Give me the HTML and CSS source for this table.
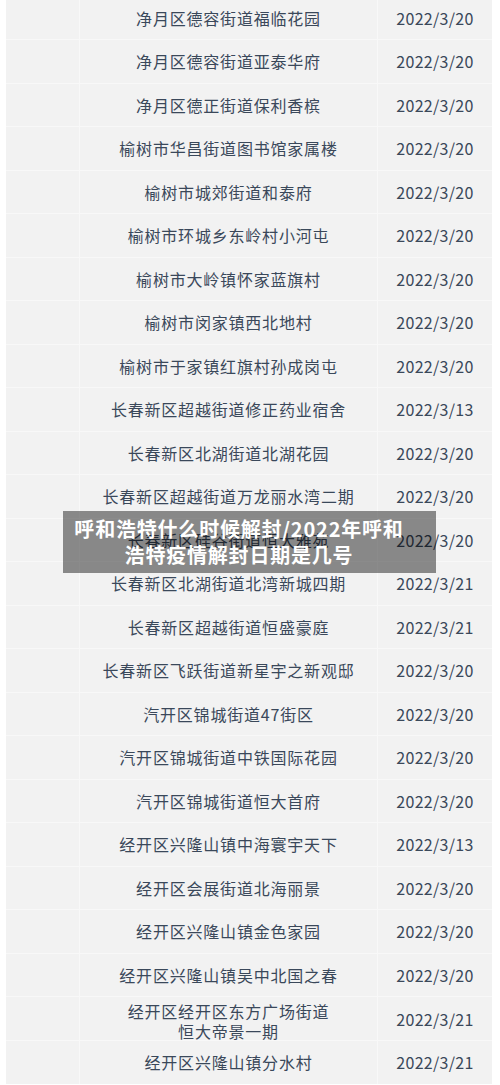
FILE: index.html
```html
<!DOCTYPE html>
<html lang="zh-CN">
<head>
<meta charset="utf-8">
<link rel="stylesheet" href="styles.css">
</head>
<body>
<div class="page">
  <div class="table">
    <div class="row"><div class="blank"></div><div class="name">净月区德容街道福临花园</div><div class="date">2022/3/20</div></div>
    <div class="row"><div class="blank"></div><div class="name">净月区德容街道亚泰华府</div><div class="date">2022/3/20</div></div>
    <div class="row"><div class="blank"></div><div class="name">净月区德正街道保利香槟</div><div class="date">2022/3/20</div></div>
    <div class="row"><div class="blank"></div><div class="name">榆树市华昌街道图书馆家属楼</div><div class="date">2022/3/20</div></div>
    <div class="row"><div class="blank"></div><div class="name">榆树市城郊街道和泰府</div><div class="date">2022/3/20</div></div>
    <div class="row"><div class="blank"></div><div class="name">榆树市环城乡东岭村小河屯</div><div class="date">2022/3/20</div></div>
    <div class="row"><div class="blank"></div><div class="name">榆树市大岭镇怀家蓝旗村</div><div class="date">2022/3/20</div></div>
    <div class="row"><div class="blank"></div><div class="name">榆树市闵家镇西北地村</div><div class="date">2022/3/20</div></div>
    <div class="row"><div class="blank"></div><div class="name">榆树市于家镇红旗村孙成岗屯</div><div class="date">2022/3/20</div></div>
    <div class="row"><div class="blank"></div><div class="name">长春新区超越街道修正药业宿舍</div><div class="date">2022/3/13</div></div>
    <div class="row"><div class="blank"></div><div class="name">长春新区北湖街道北湖花园</div><div class="date">2022/3/20</div></div>
    <div class="row"><div class="blank"></div><div class="name">长春新区超越街道万龙丽水湾二期</div><div class="date">2022/3/20</div></div>
    <div class="row"><div class="blank"></div><div class="name">长春新区硅谷街道恒大雅苑</div><div class="date">2022/3/20</div></div>
    <div class="row"><div class="blank"></div><div class="name">长春新区北湖街道北湾新城四期</div><div class="date">2022/3/21</div></div>
    <div class="row"><div class="blank"></div><div class="name">长春新区超越街道恒盛豪庭</div><div class="date">2022/3/21</div></div>
    <div class="row"><div class="blank"></div><div class="name">长春新区飞跃街道新星宇之新观邸</div><div class="date">2022/3/20</div></div>
    <div class="row"><div class="blank"></div><div class="name">汽开区锦城街道47街区</div><div class="date">2022/3/20</div></div>
    <div class="row"><div class="blank"></div><div class="name">汽开区锦城街道中铁国际花园</div><div class="date">2022/3/20</div></div>
    <div class="row"><div class="blank"></div><div class="name">汽开区锦城街道恒大首府</div><div class="date">2022/3/20</div></div>
    <div class="row"><div class="blank"></div><div class="name">经开区兴隆山镇中海寰宇天下</div><div class="date">2022/3/13</div></div>
    <div class="row"><div class="blank"></div><div class="name">经开区会展街道北海丽景</div><div class="date">2022/3/20</div></div>
    <div class="row"><div class="blank"></div><div class="name">经开区兴隆山镇金色家园</div><div class="date">2022/3/20</div></div>
    <div class="row"><div class="blank"></div><div class="name">经开区兴隆山镇吴中北国之春</div><div class="date">2022/3/20</div></div>
    <div class="row"><div class="blank"></div><div class="name two">经开区经开区东方广场街道<br>恒大帝景一期</div><div class="date">2022/3/21</div></div>
    <div class="row"><div class="blank"></div><div class="name">经开区兴隆山镇分水村</div><div class="date">2022/3/21</div></div>
  </div>
  <div class="banner">呼和浩特什么时候解封/2022年呼和<br>浩特疫情解封日期是几号</div>
</div>
</body>
</html>
```

FILE: styles.css
```css
html, body {
  margin: 0;
  padding: 0;
  background: #ffffff;
}
.page {
  position: relative;
  width: 500px;
  height: 1085px;
  overflow: hidden;
  font-family: "Noto Sans CJK SC", "Noto Sans", sans-serif;
}
.table {
  margin-top: -3.5px;
  margin-left: 6px;
  width: 486px;
  background: #f2f2f2;
}
.row {
  display: grid;
  grid-template-columns: 74px 298px 114px;
  height: 43.5px;
  box-sizing: border-box;
  border-bottom: 1px solid #f8f8f8;
}
.row:last-child {
  border-bottom: none;
}
.blank {
  border-right: 1px solid #f8f8f8;
}
.name, .date {
  display: flex;
  align-items: center;
  justify-content: center;
  text-align: center;
  color: #3a485a;
  font-size: 16px;
  letter-spacing: 0.8px;
}
.name {
  border-right: 1px solid #f8f8f8;
}
.name.two {
  line-height: 20px;
  padding-top: 4px;
}
.date {
  letter-spacing: 0.3px;
}
.banner {
  position: absolute;
  left: 63px;
  top: 511px;
  width: 373px;
  height: 62px;
  box-sizing: border-box;
  padding: 5px 30px 5px 9px;
  background: rgba(0, 0, 0, 0.44);
  color: #ffffff;
  font-weight: bold;
  font-size: 20px;
  line-height: 26px;
  letter-spacing: 0.8px;
  text-align: center;
  white-space: nowrap;
}
```
